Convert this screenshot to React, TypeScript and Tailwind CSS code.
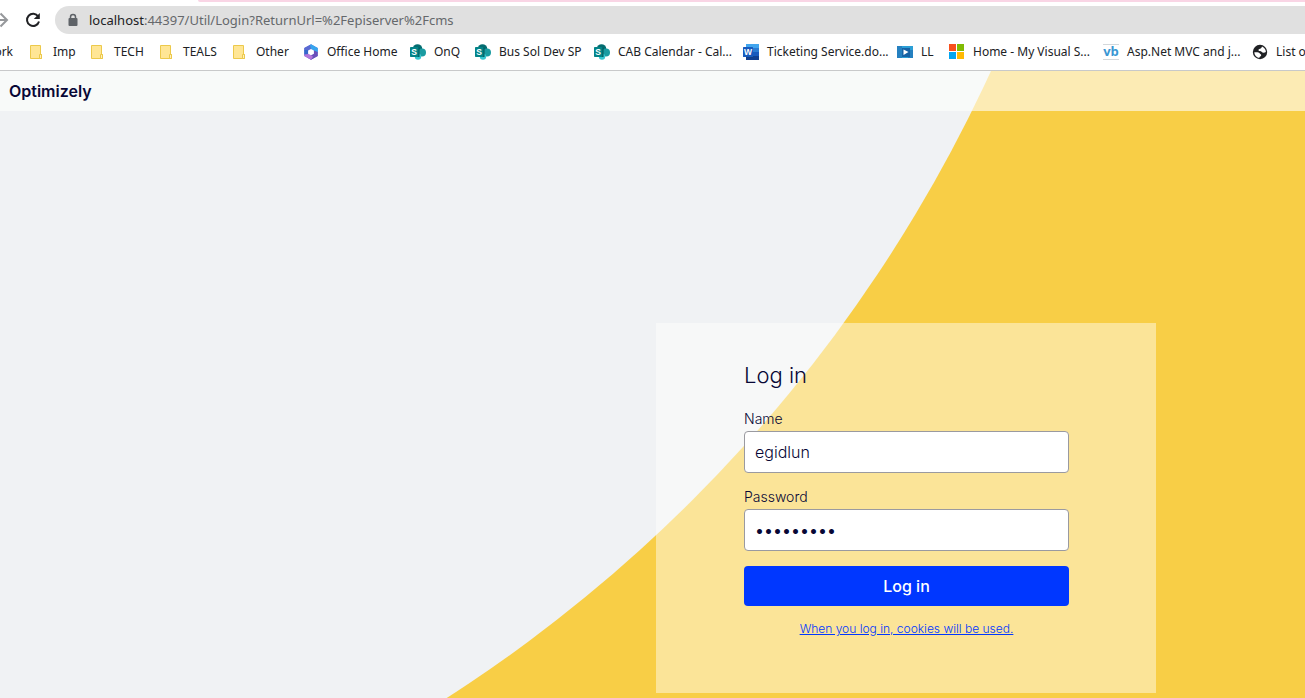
import type { ReactNode } from 'react';

interface Bookmark {
  label: string;
  icon: ReactNode;
  width: string;
}

function FolderIcon() {
  return (
    <svg viewBox="0 0 16 16" className="size-4 shrink-0" aria-hidden="true">
      <path d="M1.500 1.500h10v9h1v4h-11z" fill="#ffe695" stroke="#ecc94b" />
      <path d="M10.500 14.500v-4h2v4z" fill="#fff0bd" stroke="#ecc94b" />
    </svg>
  );
}

function OfficeIcon() {
  return (
    <svg viewBox="0 0 16 16" className="size-4 shrink-0" aria-hidden="true">
      <path d="M8 .3 14.700 4v8L8 15.800 1.300 12V4z" fill="#5b6fd8" />
      <path d="M8 .3 14.700 4v5l-3.800-2.500L8 4.900 6 2z" fill="#36a5ee" />
      <path d="M7 .9 1.300 4v2.500l4 .5L8 5z" fill="#5a6ad2" />
      <path d="M14.700 8v4L8 15.800 4.500 13.500 8 11.300l2.900-1.600V6.500z" fill="#6a50ba" />
      <path d="M1.300 9.500V12L8 15.800l2-3-2-1.500-2.900-1.600z" fill="#b476db" />
      <path d="M1.300 6v4.500L5.100 10V6z" fill="#3568cc" />
      <path d="m8 4.900 2.900 1.600v3.200L8 11.300 5.100 9.700V6.500z" fill="#fff" />
    </svg>
  );
}

function SharePointIcon() {
  return (
    <svg viewBox="0 0 16 16" className="size-4 shrink-0" aria-hidden="true">
      <circle cx="7.500" cy="5" r="4.800" fill="#036c70" />
      <circle cx="12" cy="8.500" r="4" fill="#1a9ba1" />
      <circle cx="8" cy="12.600" r="3.200" fill="#37c6d0" />
      <path d="M4 3.500h5.500v9.500H4z" fill="#025557" />
      <rect y="3" width="8.500" height="10" rx=".7" fill="#038387" />
      <text x="4.200" y="11" textAnchor="middle" fontFamily="Liberation Sans" fontSize="8.500" fontWeight="700" fill="#fff">S</text>
    </svg>
  );
}

function WordIcon() {
  return (
    <svg viewBox="0 0 16 16" className="size-4 shrink-0" aria-hidden="true">
      <path d="M3 0h13v4H3z" fill="#41a5ee" />
      <path d="M3 4h13v4H3z" fill="#2b7cd3" />
      <path d="M3 8h13v4H3z" fill="#185abd" />
      <path d="M3 12h13v4H3z" fill="#103f91" />
      <path d="M3 4h7v10H3z" fill="#123f82" />
      <rect y="3" width="10" height="10" rx=".5" fill="#185abd" />
      <text x="5" y="11" textAnchor="middle" fontFamily="Liberation Sans" fontSize="8.500" fontWeight="700" fill="#fff">W</text>
    </svg>
  );
}

function VideoIcon() {
  return (
    <svg viewBox="0 0 16 16" className="size-4 shrink-0" aria-hidden="true">
      <path d="M0 2h16v12H0z" fill="#2b9fd6" />
      <path d="M0 2h5v12H0zM11 6h5v8h-5z" fill="#2580c0" />
      <path d="M5 4h8v9H5z" fill="#1762a5" />
      <path d="m6.500 5.500 5 2.500-5 3z" fill="#fff" />
    </svg>
  );
}

function MicrosoftIcon() {
  return (
    <svg viewBox="0 0 16 16" className="size-4 shrink-0" aria-hidden="true">
      <path d="M0 0h7v7H0z" fill="#f8501d" />
      <path d="M8 0h7v7H8z" fill="#80bb03" />
      <path d="M0 8h7v7H0z" fill="#03a5f0" />
      <path d="M8 8h7v7H8z" fill="#ffb903" />
    </svg>
  );
}

function VbIcon() {
  return (
    <svg viewBox="0 0 16 16" className="size-4 shrink-0" aria-hidden="true">
      <path d="M0 .5h16M0 15.500h16" stroke="#d4d8db" />
      <text x="8" y="12" textAnchor="middle" fontFamily="Open Sans" fontSize="13" fontWeight="700" fill="#3a97d3">vb</text>
    </svg>
  );
}

function GlobeIcon() {
  return (
    <svg viewBox="0 0 16 16" className="size-4 shrink-0" aria-hidden="true">
      <circle cx="8" cy="8" r="7.200" fill="#202124" />
      <path d="M2.300 8.300c2.600-.3 4.700-.1 5.300 1 .5 1 1.700.8 1.600 1.900-.1 1.100-1.700 1.200-2 2.700-2.800-.5-4.900-2.800-4.900-5.600z" fill="#fff" />
      <path d="M10 2.500c2.300.9 3.900 3 3.900 5.500-1.700 1-3.600.8-4.300-.3-.6-1-2.900-.1-3.100-1.500C6.300 4.700 9.600 5.200 10 2.500z" fill="#fff" />
    </svg>
  );
}

const bookmarks: Bookmark[] = [
  { label: 'Imp', icon: <FolderIcon />, width: 'w-[61px]' },
  { label: 'TECH', icon: <FolderIcon />, width: 'w-[69px]' },
  { label: 'TEALS', icon: <FolderIcon />, width: 'w-[73px]' },
  { label: 'Other', icon: <FolderIcon />, width: 'w-[71px]' },
  { label: 'Office Home', icon: <OfficeIcon />, width: 'w-[107px]' },
  { label: 'OnQ', icon: <SharePointIcon />, width: 'w-[65px]' },
  { label: 'Bus Sol Dev SP', icon: <SharePointIcon />, width: 'w-[119px]' },
  { label: 'CAB Calendar - Cal...', icon: <SharePointIcon />, width: 'w-[149px]' },
  { label: 'Ticketing Service.do...', icon: <WordIcon />, width: 'w-[154px]' },
  { label: 'LL', icon: <VideoIcon />, width: 'w-[52px]' },
  { label: 'Home - My Visual S...', icon: <MicrosoftIcon />, width: 'w-[154px]' },
  { label: 'Asp.Net MVC and j...', icon: <VbIcon />, width: 'w-[149px]' },
  { label: 'List of', icon: <GlobeIcon />, width: 'w-[70px]' },
];

function BrowserBar() {
  return (
    <div className="overflow-hidden border-b border-[#c8c9ca] bg-white font-['Noto_Sans',sans-serif]">
      <div className="ml-[198px] h-[2px] rounded-bl bg-[#f9d5e5]" />
      <div className="mt-1 flex h-7 items-center">
        <button type="button" aria-label="Forward" className="w-6 shrink-0">
          <svg viewBox="0 0 24 16" className="h-4 w-6" fill="none" stroke="#96989b" strokeWidth="2" aria-hidden="true">
            <path d="M-6 8H7M.5 1.500 7 8 .5 14.500" />
          </svg>
        </button>
        <button type="button" aria-label="Reload" className="w-[31px] shrink-0">
          <svg viewBox="0 0 16 16" className="ml-px size-4" aria-hidden="true">
            <path d="M13.200 4.500A6.100 6.100 0 1 0 14 9.500" fill="none" stroke="#202124" strokeWidth="2" />
            <path d="M14.800 1v6H8.800z" fill="#202124" />
          </svg>
        </button>
        <div className="flex h-7 min-w-0 flex-1 items-center gap-[10px] rounded-l-full bg-[#e0e0e0] pl-3">
          <svg viewBox="0 0 12 14" className="h-[14px] w-3 shrink-0" aria-hidden="true">
            <path d="M3.500 6V4a2.500 2.500 0 0 1 5 0v2" fill="none" stroke="#5f6368" strokeWidth="1.500" />
            <rect x="1.500" y="5" width="9" height="8" rx="1" fill="#5f6368" />
          </svg>
          <p className="truncate text-[13px] leading-5 text-[#65686b]">
            <span className="text-[#202124]">localhost</span>:44397/Util/Login?ReturnUrl=%2Fepiserver%2Fcms
          </p>
        </div>
      </div>
      <nav aria-label="Bookmarks" className="flex h-9 items-center whitespace-nowrap text-xs text-[#202124]">
        <a href="#" className="flex w-[29px] shrink-0 justify-end pr-4">
          ork
        </a>
        {bookmarks.map(bookmark => (
          <a key={bookmark.label} href="#" className={`flex shrink-0 items-center gap-2 ${bookmark.width}`}>
            {bookmark.icon}
            <span>{bookmark.label}</span>
          </a>
        ))}
      </nav>
    </div>
  );
}

const inputClass =
  'mt-[2px] block h-[42px] w-full rounded border border-[#9a9aa0] bg-white px-[10px] text-base outline-none';

function LoginForm() {
  return (
    <form
      className="w-full max-w-[500px] bg-[#fffffc]/45 pt-9 pr-[87px] pb-[55px] pl-[88px]"
      onSubmit={event => event.preventDefault()}
    >
      <h1 className="text-[22px] leading-8 font-light">Log in</h1>
      <label htmlFor="name" className="mt-[18px] block text-sm leading-5 font-light">
        Name
      </label>
      <input id="name" type="text" defaultValue="egidlun" className={`${inputClass} font-light`} />
      <label htmlFor="password" className="mt-[14px] block text-sm leading-5 font-light">
        Password
      </label>
      <input id="password" type="password" defaultValue="episerver" className={inputClass} />
      <button type="submit" className="mt-[15px] block h-10 w-full rounded bg-[#0037ff] text-base font-medium text-white">
        Log in
      </button>
      <a href="#" className="mt-[14px] block text-center text-xs leading-[18px] font-light text-[#0037ff] underline">
        When you log in, cookies will be used.
      </a>
    </form>
  );
}

export default function App() {
  return (
    <div className="flex min-h-screen flex-col overflow-hidden">
      <BrowserBar />
      <div className="relative isolate flex flex-1 flex-col overflow-hidden bg-[#f8ce46] font-['Inter',sans-serif] text-[#080736]">
        <svg className="absolute inset-0 -z-10 size-full" aria-hidden="true">
          <circle cx="-352" cy="-616" r="1477.500" fill="#f0f2f4" />
        </svg>
        <header className="bg-[#fefffd]/60 px-[9px] py-2">
          <p className="text-base leading-6 font-semibold">Optimizely</p>
        </header>
        <main className="flex flex-1 items-end justify-end pr-[149px] pb-[5px]">
          <LoginForm />
        </main>
      </div>
    </div>
  );
}
